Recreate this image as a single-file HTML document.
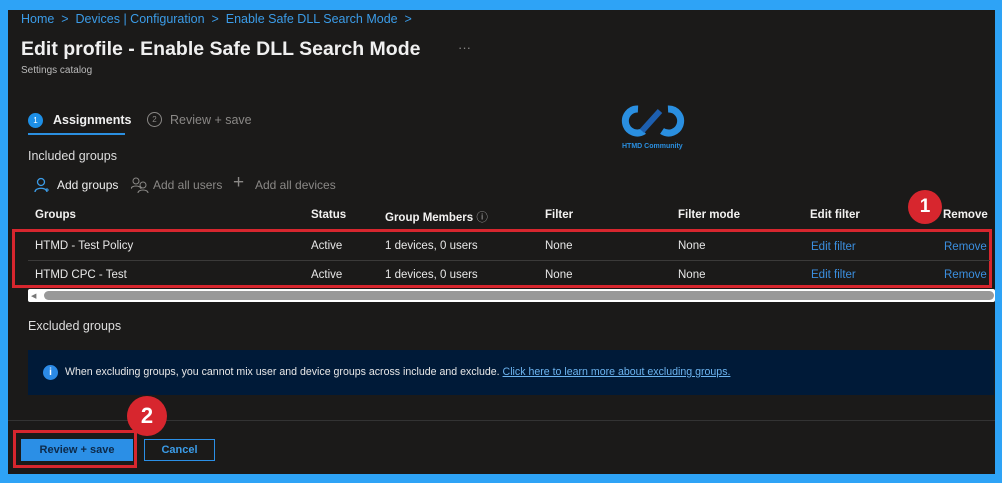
<!DOCTYPE html>
<html><head><style>
*{margin:0;padding:0;box-sizing:border-box}
body{width:1002px;height:483px;background:#2ea3f6;font-family:"Liberation Sans",sans-serif;position:relative;overflow:hidden}
#m{position:absolute;left:8px;top:10px;width:987px;height:464px;background:#1b1a19}
.a{position:absolute;white-space:nowrap}
.lk{color:#3b9ce8}
.w{color:#f0f0f0}
.g{color:#8a8886}
.h{font-weight:bold;color:#f3f2f1;font-size:11.5px}
.c{font-size:11.5px;color:#e8e8e8}
.e{font-size:11.5px;color:#3b8fe0}
</style></head><body>
<div id="m"></div>
<div class="a lk" style="left:21px;top:12px;font-size:12.5px">Home &nbsp;&gt;&nbsp; Devices | Configuration &nbsp;&gt;&nbsp; Enable Safe DLL Search Mode &nbsp;&gt;</div>
<div class="a w" style="left:21px;top:38px;font-size:19.5px;font-weight:bold">Edit profile - Enable Safe DLL Search Mode</div>
<div class="a g" style="left:458px;top:40px;font-size:13px">···</div>
<div class="a g" style="left:21px;top:65px;font-size:10px;color:#bbb">Settings catalog</div>
<div class="a" style="left:28px;top:113px;width:15px;height:15px;border-radius:50%;background:#1d8fe6;color:#fff;font-size:8px;text-align:center;line-height:15px">1</div>
<div class="a w" style="left:53px;top:113px;font-size:12.5px;font-weight:bold">Assignments</div>
<div class="a" style="left:28px;top:133px;width:97px;height:2px;background:#2b8fe0"></div>
<div class="a" style="left:147px;top:112px;width:15px;height:15px;border-radius:50%;border:1px solid #8a8886;color:#8a8886;font-size:8px;text-align:center;line-height:13px">2</div>
<div class="a g" style="left:170px;top:113px;font-size:12.5px">Review + save</div>
<svg class="a" style="left:620px;top:103px" width="66" height="38" viewBox="0 0 66 38"><path d="M18 6a12 12 0 1 0 6 22" stroke="#2a8fe0" stroke-width="7" fill="none"/><path d="M48 6a12 12 0 1 1-6 22" stroke="#2a8fe0" stroke-width="7" fill="none"/><path d="M22 28 L40 8" stroke="#1d5fb0" stroke-width="6"/></svg>
<div class="a" style="left:622px;top:143px;font-size:7px;color:#2a8fe0;font-weight:bold">HTMD Community</div>
<div class="a w" style="left:28px;top:149px;font-size:12.5px;color:#ddd">Included groups</div>
<svg class="a" style="left:34px;top:177px" width="16" height="16"><circle cx="7" cy="5" r="3.5" stroke="#3b9ce8" fill="none" stroke-width="1.3"/><path d="M1 15c0-5 12-5 12 0" stroke="#3b9ce8" fill="none" stroke-width="1.3"/><path d="M13 11v4M11 13h4" stroke="#3b9ce8"/></svg>
<svg class="a" style="left:131px;top:177px" width="18" height="16"><circle cx="5" cy="4" r="3" stroke="#8a8886" fill="none"/><path d="M0 12c0-4 10-4 10 0" stroke="#8a8886" fill="none"/><circle cx="12" cy="8" r="3" stroke="#8a8886" fill="none"/><path d="M7 16c0-4 10-4 10 0" stroke="#8a8886" fill="none"/></svg>
<div class="a w" style="left:57px;top:178px;font-size:12px">Add groups</div>
<div class="a g" style="left:153px;top:178px;font-size:12px">Add all users</div>
<div class="a g" style="left:233px;top:172px;font-size:19px">+</div>
<div class="a g" style="left:255px;top:178px;font-size:12px">Add all devices</div>
<div class="a h" style="left:35px;top:209px">Groups</div>
<div class="a h" style="left:311px;top:209px">Status</div>
<div class="a h" style="left:385px;top:209px">Group Members <span style="font-weight:normal;color:#aaa">ⓘ</span></div>
<div class="a h" style="left:545px;top:209px">Filter</div>
<div class="a h" style="left:678px;top:209px">Filter mode</div>
<div class="a h" style="left:810px;top:209px">Edit filter</div>
<div class="a h" style="left:943px;top:209px">Remove</div>
<div class="a" style="left:12px;top:229px;width:980px;height:59px;border:3px solid #d7262e"></div>
<div class="a" style="left:28px;top:260px;width:962px;height:1px;background:#3b3a39"></div>
<div class="a c" style="left:35px;top:240px">HTMD - Test Policy</div>
<div class="a c" style="left:311px;top:240px">Active</div>
<div class="a c" style="left:385px;top:240px">1 devices, 0 users</div>
<div class="a c" style="left:545px;top:240px">None</div>
<div class="a c" style="left:678px;top:240px">None</div>
<div class="a e" style="left:811px;top:241px">Edit filter</div>
<div class="a e" style="left:944px;top:241px">Remove</div>
<div class="a c" style="left:35px;top:269px">HTMD CPC - Test</div>
<div class="a c" style="left:311px;top:269px">Active</div>
<div class="a c" style="left:385px;top:269px">1 devices, 0 users</div>
<div class="a c" style="left:545px;top:269px">None</div>
<div class="a c" style="left:678px;top:269px">None</div>
<div class="a e" style="left:811px;top:269px">Edit filter</div>
<div class="a e" style="left:944px;top:269px">Remove</div>
<div class="a" style="left:28px;top:289px;width:967px;height:13px;background:#fff;border-radius:2px"></div>
<div class="a" style="left:44px;top:291px;width:950px;height:9px;background:#999;border-radius:5px"></div>
<div class="a" style="left:31px;top:292px;font-size:7px;color:#777">◀</div>
<div class="a w" style="left:28px;top:319px;font-size:12.5px;color:#ddd">Excluded groups</div>
<div class="a" style="left:28px;top:350px;width:966px;height:45px;background:#001a38"></div>
<div class="a" style="left:43px;top:365px;width:15px;height:15px;border-radius:50%;background:#2b8ae6;color:#fff;font-size:10px;font-weight:bold;text-align:center;line-height:15px">i</div>
<div class="a" style="left:65px;top:366px;font-size:10.6px;color:#e8e8e8">When excluding groups, you cannot mix user and device groups across include and exclude. <span style="color:#6cb4f0;text-decoration:underline">Click here to learn more about excluding groups.</span></div>
<div class="a" style="left:8px;top:420px;width:987px;height:1px;background:#333"></div>
<div class="a" style="left:13px;top:430px;width:124px;height:38px;border:3px solid #d7262e"></div>
<div class="a" style="left:21px;top:439px;width:112px;height:22px;background:#2b8fe6;color:#0d2a4a;font-size:11px;font-weight:bold;text-align:center;line-height:22px">Review + save</div>
<div class="a" style="left:144px;top:439px;width:71px;height:22px;border:1px solid #2b8fe6;color:#3b9ce8;font-size:11px;font-weight:bold;text-align:center;line-height:20px">Cancel</div>
<div class="a" style="left:127px;top:396px;width:40px;height:40px;border-radius:50%;background:#d7262e;color:#fff;font-size:22px;font-weight:bold;text-align:center;line-height:40px">2</div>
<div class="a" style="left:908px;top:190px;width:34px;height:34px;border-radius:50%;background:#d7262e;color:#fff;font-size:19px;font-weight:bold;text-align:center;line-height:34px">1</div>
</body></html>
